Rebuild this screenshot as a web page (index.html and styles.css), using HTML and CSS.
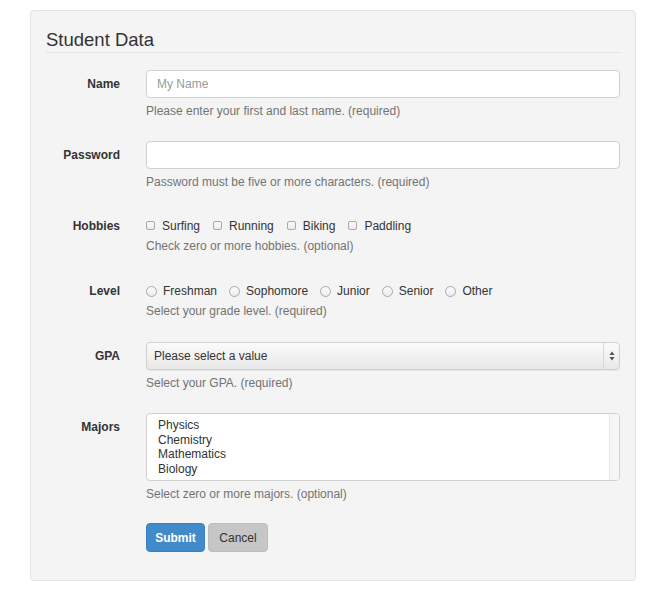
FILE: index.html
```html
<!DOCTYPE html>
<html>
<head>
<meta charset="utf-8">
<link rel="stylesheet" href="styles.css">
</head>
<body>
<form class="panel">
  <h2 class="title">Student Data</h2>

  <div class="row">
    <label class="lbl">Name</label>
    <div class="ctl">
      <div class="input placeholder">My Name</div>
      <div class="help">Please enter your first and last name. (required)</div>
    </div>
  </div>

  <div class="row">
    <label class="lbl">Password</label>
    <div class="ctl">
      <div class="input"></div>
      <div class="help">Password must be five or more characters. (required)</div>
    </div>
  </div>

  <div class="row">
    <label class="lbl lbl-choice hob">Hobbies</label>
    <div class="ctl">
      <div class="choices hob">
        <span class="opt"><span class="cb"></span>Surfing</span>
        <span class="opt"><span class="cb"></span>Running</span>
        <span class="opt"><span class="cb"></span>Biking</span>
        <span class="opt"><span class="cb"></span>Paddling</span>
      </div>
      <div class="help tight">Check zero or more hobbies. (optional)</div>
    </div>
  </div>

  <div class="row">
    <label class="lbl lbl-choice lev">Level</label>
    <div class="ctl">
      <div class="choices lev">
        <span class="opt"><span class="rd"></span>Freshman</span>
        <span class="opt"><span class="rd"></span>Sophomore</span>
        <span class="opt"><span class="rd"></span>Junior</span>
        <span class="opt"><span class="rd"></span>Senior</span>
        <span class="opt"><span class="rd"></span>Other</span>
      </div>
      <div class="help tight">Select your grade level. (required)</div>
    </div>
  </div>

  <div class="row gpa">
    <label class="lbl">GPA</label>
    <div class="ctl">
      <div class="select">
        <span class="select-text">Please select a value</span>
        <span class="select-arrows">
          <svg width="6" height="10" viewBox="0 0 6 10"><path d="M3 0.5L5.6 4H0.4Z M3 9.5L5.6 6H0.4Z" fill="#555"/></svg>
        </span>
      </div>
      <div class="help">Select your GPA. (required)</div>
    </div>
  </div>

  <div class="row">
    <label class="lbl">Majors</label>
    <div class="ctl">
      <div class="listbox">
        <div class="items">
          <div>Physics</div>
          <div>Chemistry</div>
          <div>Mathematics</div>
          <div>Biology</div>
        </div>
        <div class="scroll"></div>
      </div>
      <div class="help">Select zero or more majors. (optional)</div>
    </div>
  </div>

  <div class="row buttons">
    <span></span>
    <div class="ctl btns">
      <button type="button" class="btn primary">Submit</button>
      <button type="button" class="btn default">Cancel</button>
    </div>
  </div>
</form>
</body>
</html>
```

FILE: styles.css
```css
* { box-sizing: border-box; }
html, body { background: #fff; }
body {
  margin: 0;
  padding: 10px 0 0 30px;
  font-family: "Liberation Sans", Arial, sans-serif;
  font-size: 12px;
  color: #333;
}
.panel {
  width: 606px;
  height: 571px;
  background: #f4f4f4;
  border: 1px solid #e2e2e2;
  border-radius: 4px;
  padding: 18px 15px 0 15px;
}
.title {
  margin: 0;
  font-size: 18.5px;
  font-weight: normal;
  line-height: 22px;
  color: #333;
  padding-bottom: 1px;
  border-bottom: 1px solid #e4e4e4;
  margin-bottom: 17px;
}
.row {
  display: grid;
  grid-template-columns: 74px 474px;
  column-gap: 26px;
  margin-bottom: 22px;
  align-items: start;
}
.lbl {
  text-align: right;
  font-weight: bold;
  line-height: 28px;
  color: #333;
}
.lbl-choice { line-height: 20px; }
.lbl.hob, .choices.hob { padding-top: 4px; }
.lbl.lev, .choices.lev { padding-top: 5px; }
.gpa { padding-top: 1px; }
.input {
  height: 28px;
  background: #fff;
  border: 1px solid #d0d0d0;
  border-radius: 4px;
  padding: 0 10px;
  line-height: 26px;
  font-size: 12px;
}
.placeholder { color: #9a9a9a; }
.help {
  margin-top: 5px;
  line-height: 16px;
  color: #737373;
}
.help.tight { margin-top: 2px; }
.choices {
  display: flex;
  line-height: 20px;
  color: #333;
}
.opt {
  display: inline-flex;
  align-items: center;
  margin-right: 13px;
}
.choices.lev .opt { margin-right: 12px; }
.cb {
  width: 9px;
  height: 9px;
  border: 1px solid #a9a9a9;
  border-radius: 2px;
  background: linear-gradient(#fafafa, #ececec);
  margin-right: 7px;
  margin-top: -1px;
}
.rd {
  width: 11px;
  height: 11px;
  border: 1px solid #a9a9a9;
  border-radius: 50%;
  background: linear-gradient(#fcfcfc, #ececec);
  margin-right: 6px;
}
.select {
  position: relative;
  height: 28px;
  border: 1px solid #d0d0d0;
  border-radius: 4px;
  background: linear-gradient(#fbfbfb, #e8e8e8);
  display: flex;
  align-items: center;
  box-shadow: 0 1px 1px rgba(0,0,0,0.06);
}
.select-text {
  flex: 1;
  padding-left: 7px;
  color: #333;
}
.select-arrows {
  width: 16px;
  height: 26px;
  border-left: 1px solid #d8d8d8;
  display: flex;
  align-items: center;
  justify-content: center;
}
.listbox {
  height: 68px;
  background: #fff;
  border: 1px solid #d0d0d0;
  border-radius: 4px;
  display: flex;
  overflow: hidden;
}
.items {
  flex: 1;
  padding: 4px 0 0 11px;
  line-height: 14.5px;
  color: #333;
  font-size: 12px;
}
.scroll {
  width: 10px;
  background: #f6f6f6;
  border-left: 1px solid #e8e8e8;
}
.buttons { margin-top: -1px; }
.btns { display: flex; gap: 3px; }
.btn {
  height: 29px;
  border-radius: 4px;
  font-family: "Liberation Sans", Arial, sans-serif;
  font-size: 12px;
  padding: 0;
  cursor: pointer;
}
.primary {
  width: 59px;
  background: #428bca;
  border: 1px solid #3a7fbf;
  color: #fff;
  font-weight: bold;
}
.default {
  width: 60px;
  background: #c6c6c6;
  border: 1px solid #bdbdbd;
  color: #333;
}
```
